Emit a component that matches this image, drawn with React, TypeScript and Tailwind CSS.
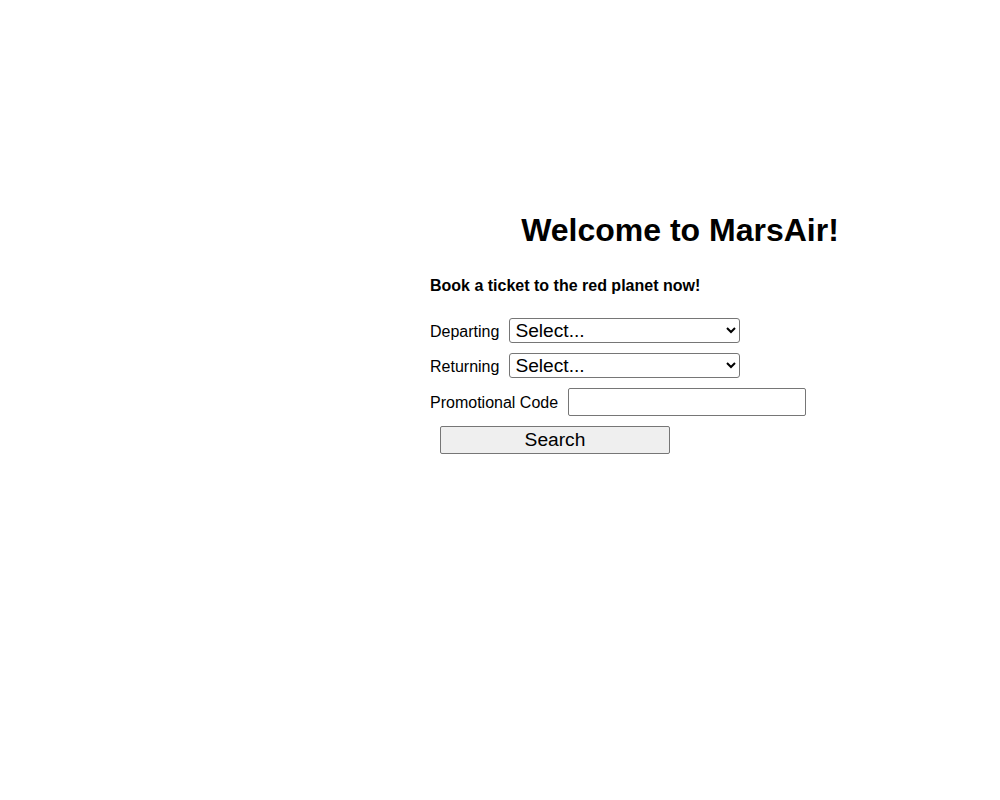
import React from "react";

export default function App() {
  return (
    <div className="min-h-[800px] w-[1000px] bg-white text-black [font-family:'Liberation_Sans',Arial,sans-serif]">
      <div className="ml-[430px] w-[500px] pt-[212px]">
        <h1 className="text-center text-[32px] font-bold leading-[37px]">Welcome to MarsAir!</h1>
        <p className="mt-[28px] text-[16px] font-bold leading-[18px]">Book a ticket to the red planet now!</p>
        <form className="mt-[23px] flex flex-col gap-[10px]" onSubmit={(e) => e.preventDefault()}>
          <div className="flex items-center gap-[10px] text-[16px]">
            <label htmlFor="dep" className="translate-y-px">Departing</label>
            <select id="dep" className="h-[25px] w-[231px] rounded-[3px] border border-[#767676] bg-white pl-[1px] text-[19.2px] leading-[22px]">
              <option>Select...</option>
            </select>
          </div>
          <div className="flex items-center gap-[10px] text-[16px]">
            <label htmlFor="ret" className="translate-y-px">Returning</label>
            <select id="ret" className="h-[25px] w-[231px] rounded-[3px] border border-[#767676] bg-white pl-[1px] text-[19.2px] leading-[22px]">
              <option>Select...</option>
            </select>
          </div>
          <div className="flex items-center gap-[10px] text-[16px]">
            <label htmlFor="promo" className="translate-y-px">Promotional Code</label>
            <input id="promo" type="text" className="h-[28px] w-[238px] rounded-[2px] border border-[#767676] bg-white px-[2px] text-[19.2px]" />
          </div>
          <div className="pl-[10px]">
            <button type="submit" className="h-[28px] w-[230px] rounded-[2px] border border-[#767676] bg-[#efefef] text-[19.2px] leading-[22px]">Search</button>
          </div>
        </form>
      </div>
    </div>
  );
}
